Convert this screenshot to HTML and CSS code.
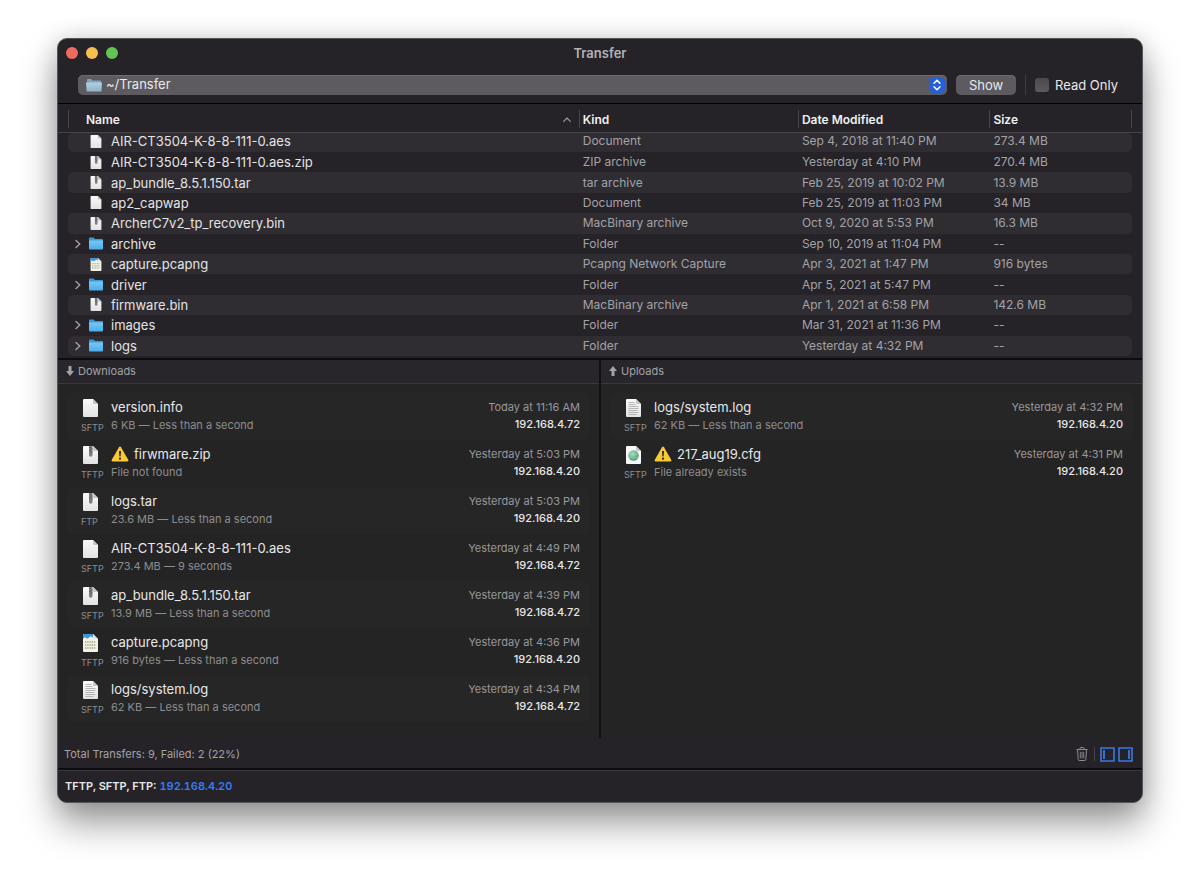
FILE: index.html
```html
<!DOCTYPE html>
<html lang="en">
<head>
<meta charset="utf-8">
<title>Transfer</title>
<link rel="stylesheet" href="styles.css">
</head>
<body>
<svg class="defs" aria-hidden="true">
  <defs>
    <linearGradient id="paper" x1="0" y1="0" x2="0" y2="1"><stop offset="0" stop-color="#fafafa"/><stop offset="1" stop-color="#e2e2e3"/></linearGradient>
    <linearGradient id="blue" x1="0" y1="0" x2="0" y2="1"><stop offset="0" stop-color="#76c8f5"/><stop offset="1" stop-color="#4cacea"/></linearGradient>
    <linearGradient id="pale" x1="0" y1="0" x2="0" y2="1"><stop offset="0" stop-color="#b4cfe2"/><stop offset="1" stop-color="#8fb2cc"/></linearGradient>
    <radialGradient id="globe" cx=".4" cy=".35" r=".7"><stop offset="0" stop-color="#a9dcc0"/><stop offset="1" stop-color="#3f9b6d"/></radialGradient>
  </defs>
  <symbol id="doc" viewBox="0 0 15 18">
    <path d="M1 0h9l5 5v12a1 1 0 0 1-1 1H1a1 1 0 0 1-1-1V1a1 1 0 0 1 1-1z" fill="url(#paper)"/>
    <path d="M10 0l5 5h-4a1 1 0 0 1-1-1z" fill="#c6c6c8"/>
  </symbol>
  <symbol id="zip" viewBox="0 0 15 18">
    <path d="M1 0h9l5 5v12a1 1 0 0 1-1 1H1a1 1 0 0 1-1-1V1a1 1 0 0 1 1-1z" fill="url(#paper)"/>
    <path d="M10 0l5 5h-4a1 1 0 0 1-1-1z" fill="#c6c6c8"/>
    <path d="M6 0h3.500v9a1.700 1.700 0 0 1-3.500 0z" fill="#7d7d80"/>
    <path d="M6 1.500h2M7.500 3h2M6 4.500h2M7.500 6h2" stroke="#5f5f64"/>
  </symbol>
  <symbol id="log" viewBox="0 0 15 18">
    <path d="M1 0h9l5 5v12a1 1 0 0 1-1 1H1a1 1 0 0 1-1-1V1a1 1 0 0 1 1-1z" fill="url(#paper)"/>
    <path d="M10 0l5 5h-4a1 1 0 0 1-1-1z" fill="#c6c6c8"/>
    <path d="M2.500 3.500h6M2.500 5.500h7M2.500 7.500h10M2.500 9.500h10M2.500 11.500h9M2.500 13.500h10M2.500 15.500h8" stroke="#b0b0b3" stroke-width=".9"/>
  </symbol>
  <symbol id="pcap" viewBox="0 0 15 18">
    <path d="M1 0h9l5 5v12a1 1 0 0 1-1 1H1a1 1 0 0 1-1-1V1a1 1 0 0 1 1-1z" fill="#f3f2e4"/>
    <path d="M0 5V1a1 1 0 0 1 1-1h9l3.500 3.500-1.500 1C10 4 9 2.500 8 2.500 6 2.500 6 5 4 4.500 2.500 4 2 2.500 0 5z" fill="#3a97d9"/>
    <path d="M10 0l5 5h-4a1 1 0 0 1-1-1z" fill="#d8e8f2"/>
    <path d="M2 8h11M2 11h11M2 14h11" stroke="#a5a58c" stroke-width="1.400" stroke-dasharray="1.400 .8"/>
  </symbol>
  <symbol id="cfg" viewBox="0 0 15 18">
    <path d="M1 0h9l5 5v12a1 1 0 0 1-1 1H1a1 1 0 0 1-1-1V1a1 1 0 0 1 1-1z" fill="#f8f8f8"/>
    <path d="M10 0l5 5h-4a1 1 0 0 1-1-1z" fill="#c6c6c8"/>
    <circle cx="7.500" cy="9.500" r="5.200" fill="url(#globe)"/>
    <path d="M3 8q4.500 2 9 0M3 11.300q4.500 2 9 0" fill="none" stroke="#a5dabb" stroke-width=".5"/>
  </symbol>
  <symbol id="folder" viewBox="0 0 14 12">
    <path d="M0 1a1 1 0 0 1 1-1h3.500l1.500 1.500h7a1 1 0 0 1 1 1V5H0z" fill="#3c9ad6"/>
    <path d="M0 3h14v8a1 1 0 0 1-1 1H1a1 1 0 0 1-1-1z" fill="url(#blue)"/>
  </symbol>
  <symbol id="home" viewBox="0 0 16 13">
    <path d="M1 1a1 1 0 0 1 1-1h3l1.500 1.500H14a1 1 0 0 1 1 1V6H1z" fill="#7fa5c2"/>
    <path d="M0 3.500h16l-.6 9H.6z" fill="url(#pale)"/>
  </symbol>
  <symbol id="warn" viewBox="0 0 18 16">
    <path d="M8 1.200a1.200 1.200 0 0 1 2 0l7.200 12.600a1.200 1.200 0 0 1-1 1.700H1.800a1.200 1.200 0 0 1-1-1.700z" fill="#fac93a"/>
    <path d="M8 5h2l-.4 5.500H8.400z" fill="#2b2415"/><circle cx="9" cy="12.700" r="1.100" fill="#2b2415"/>
  </symbol>
  <symbol id="chev" viewBox="0 0 6 10"><path d="M1 1.500L4.800 5 1 8.500" fill="none" stroke="#a3a2a6" stroke-width="1.400" stroke-linecap="round" stroke-linejoin="round"/></symbol>
</svg>

<main class="window">
  <header class="titlebar">
    <div class="lights">
      <button class="light close" aria-label="Close"></button>
      <button class="light minimize" aria-label="Minimize"></button>
      <button class="light zoom" aria-label="Zoom"></button>
    </div>
    <h1 class="title">Transfer</h1>
  </header>

  <div class="toolbar">
    <div class="path">
      <svg class="path-icon"><use href="#home"/></svg>
      <select class="path-select" aria-label="Folder"><option>~/Transfer</option></select>
      <svg class="path-arrows" viewBox="0 0 16 16"><rect width="16" height="16" rx="4" fill="#2660d8"/><path d="M5 6.300l3-3 3 3M5 9.700l3 3 3-3" fill="none" stroke="#fff" stroke-width="1.500" stroke-linecap="round" stroke-linejoin="round"/></svg>
    </div>
    <button class="show">Show</button>
    <label class="readonly"><input class="check" type="checkbox">Read Only</label>
  </div>

  <section class="files">
    <table class="table">
      <colgroup><col class="col-name"><col class="col-kind"><col class="col-date"><col class="col-size"></colgroup>
      <thead>
        <tr>
          <th><div class="head head-name">Name<svg class="sort" viewBox="0 0 8 5"><path d="M.7 4.300L4 1l3.300 3.300" fill="none" stroke="#a3a2a6" stroke-width="1.100" stroke-linecap="round"/></svg></div></th>
          <th><div class="head">Kind</div></th>
          <th><div class="head">Date Modified</div></th>
          <th><div class="head head-last">Size</div></th>
        </tr>
      </thead>
      <tbody>
        <tr class="first"><td><div class="name"><span class="twist"></span><svg class="file-icon"><use href="#doc"/></svg>AIR-CT3504-K-8-8-111-0.aes</div></td><td>Document</td><td>Sep 4, 2018 at 11:40 PM</td><td>273.4 MB</td></tr>
        <tr><td><div class="name"><span class="twist"></span><svg class="file-icon"><use href="#zip"/></svg>AIR-CT3504-K-8-8-111-0.aes.zip</div></td><td>ZIP archive</td><td>Yesterday at 4:10 PM</td><td>270.4 MB</td></tr>
        <tr><td><div class="name"><span class="twist"></span><svg class="file-icon"><use href="#zip"/></svg>ap_bundle_8.5.1.150.tar</div></td><td>tar archive</td><td>Feb 25, 2019 at 10:02 PM</td><td>13.9 MB</td></tr>
        <tr><td><div class="name"><span class="twist"></span><svg class="file-icon"><use href="#doc"/></svg>ap2_capwap</div></td><td>Document</td><td>Feb 25, 2019 at 11:03 PM</td><td>34 MB</td></tr>
        <tr><td><div class="name"><span class="twist"></span><svg class="file-icon"><use href="#zip"/></svg>ArcherC7v2_tp_recovery.bin</div></td><td>MacBinary archive</td><td>Oct 9, 2020 at 5:53 PM</td><td>16.3 MB</td></tr>
        <tr><td><div class="name"><button class="twist" aria-label="Expand archive"><svg class="chev"><use href="#chev"/></svg></button><svg class="file-icon"><use href="#folder"/></svg>archive</div></td><td>Folder</td><td>Sep 10, 2019 at 11:04 PM</td><td>--</td></tr>
        <tr><td><div class="name"><span class="twist"></span><svg class="file-icon"><use href="#pcap"/></svg>capture.pcapng</div></td><td>Pcapng Network Capture</td><td>Apr 3, 2021 at 1:47 PM</td><td>916 bytes</td></tr>
        <tr><td><div class="name"><button class="twist" aria-label="Expand driver"><svg class="chev"><use href="#chev"/></svg></button><svg class="file-icon"><use href="#folder"/></svg>driver</div></td><td>Folder</td><td>Apr 5, 2021 at 5:47 PM</td><td>--</td></tr>
        <tr><td><div class="name"><span class="twist"></span><svg class="file-icon"><use href="#zip"/></svg>firmware.bin</div></td><td>MacBinary archive</td><td>Apr 1, 2021 at 6:58 PM</td><td>142.6 MB</td></tr>
        <tr><td><div class="name"><button class="twist" aria-label="Expand images"><svg class="chev"><use href="#chev"/></svg></button><svg class="file-icon"><use href="#folder"/></svg>images</div></td><td>Folder</td><td>Mar 31, 2021 at 11:36 PM</td><td>--</td></tr>
        <tr><td><div class="name"><button class="twist" aria-label="Expand logs"><svg class="chev"><use href="#chev"/></svg></button><svg class="file-icon"><use href="#folder"/></svg>logs</div></td><td>Folder</td><td>Yesterday at 4:32 PM</td><td>--</td></tr>
      </tbody>
    </table>
  </section>

  <div class="panes">
    <section class="pane">
      <h2 class="pane-head"><svg class="arrow" viewBox="0 0 8 10"><path d="M2.500 0h3v5H8L4 10 0 5h2.500z" fill="#a3a2a6"/></svg>Downloads</h2>
      <ul class="list">
        <li class="item"><div class="type"><svg class="type-icon"><use href="#doc"/></svg>SFTP</div><div class="info"><div class="file">version.info</div><div class="note">6 KB — Less than a second</div></div><div class="meta"><div class="when">Today at 11:16 AM</div><div class="host">192.168.4.72</div></div></li>
        <li class="item"><div class="type"><svg class="type-icon"><use href="#zip"/></svg>TFTP</div><div class="info"><div class="file"><svg class="warn"><use href="#warn"/></svg>firwmare.zip</div><div class="note">File not found</div></div><div class="meta"><div class="when">Yesterday at 5:03 PM</div><div class="host">192.168.4.20</div></div></li>
        <li class="item"><div class="type"><svg class="type-icon"><use href="#zip"/></svg>FTP</div><div class="info"><div class="file">logs.tar</div><div class="note">23.6 MB — Less than a second</div></div><div class="meta"><div class="when">Yesterday at 5:03 PM</div><div class="host">192.168.4.20</div></div></li>
        <li class="item"><div class="type"><svg class="type-icon"><use href="#doc"/></svg>SFTP</div><div class="info"><div class="file">AIR-CT3504-K-8-8-111-0.aes</div><div class="note">273.4 MB — 9 seconds</div></div><div class="meta"><div class="when">Yesterday at 4:49 PM</div><div class="host">192.168.4.72</div></div></li>
        <li class="item"><div class="type"><svg class="type-icon"><use href="#zip"/></svg>SFTP</div><div class="info"><div class="file">ap_bundle_8.5.1.150.tar</div><div class="note">13.9 MB — Less than a second</div></div><div class="meta"><div class="when">Yesterday at 4:39 PM</div><div class="host">192.168.4.72</div></div></li>
        <li class="item"><div class="type"><svg class="type-icon"><use href="#pcap"/></svg>TFTP</div><div class="info"><div class="file">capture.pcapng</div><div class="note">916 bytes — Less than a second</div></div><div class="meta"><div class="when">Yesterday at 4:36 PM</div><div class="host">192.168.4.20</div></div></li>
        <li class="item"><div class="type"><svg class="type-icon"><use href="#log"/></svg>SFTP</div><div class="info"><div class="file">logs/system.log</div><div class="note">62 KB — Less than a second</div></div><div class="meta"><div class="when">Yesterday at 4:34 PM</div><div class="host">192.168.4.72</div></div></li>
      </ul>
    </section>
    <section class="pane">
      <h2 class="pane-head"><svg class="arrow" viewBox="0 0 8 10"><path d="M2.500 10h3V5H8L4 0 0 5h2.500z" fill="#a3a2a6"/></svg>Uploads</h2>
      <ul class="list">
        <li class="item"><div class="type"><svg class="type-icon"><use href="#log"/></svg>SFTP</div><div class="info"><div class="file">logs/system.log</div><div class="note">62 KB — Less than a second</div></div><div class="meta"><div class="when">Yesterday at 4:32 PM</div><div class="host">192.168.4.20</div></div></li>
        <li class="item"><div class="type"><svg class="type-icon"><use href="#cfg"/></svg>SFTP</div><div class="info"><div class="file"><svg class="warn"><use href="#warn"/></svg>217_aug19.cfg</div><div class="note">File already exists</div></div><div class="meta"><div class="when">Yesterday at 4:31 PM</div><div class="host">192.168.4.20</div></div></li>
      </ul>
    </section>
  </div>

  <div class="status">
    <span>Total Transfers: 9, Failed: 2 (22%)</span>
    <div class="tools">
      <button class="tool trash" aria-label="Clear transfers"><svg width="12" height="14" viewBox="0 0 12 14" fill="none" stroke="#8c8b8f"><path d="M.5 2.500h11M4 2.500V1.200Q4 .5 4.700.5h2.600q.7 0 .7.700v1.300M1.500 2.500l.7 10q.1 1 1 1h5.600q.9 0 1-1l.7-10"/><path d="M4.300 4.800v6.500M6 4.800v6.500M7.700 4.800v6.500" stroke-width=".9"/></svg></button>
      <button class="tool" aria-label="Toggle downloads"><svg width="15" height="15" viewBox="0 0 15 15"><path d="M1 1h13v13H1z" fill="none" stroke="#3b78e0" stroke-width="1.600"/><path d="M4 3v9" stroke="#3b78e0" stroke-width="1.800"/></svg></button>
      <button class="tool" aria-label="Toggle uploads"><svg width="15" height="15" viewBox="0 0 15 15"><path d="M1 1h13v13H1z" fill="none" stroke="#3b78e0" stroke-width="1.600"/><path d="M11 3v9" stroke="#3b78e0" stroke-width="1.800"/></svg></button>
    </div>
  </div>

  <footer class="footer">TFTP, SFTP, FTP: <a class="address" href="#">192.168.4.20</a></footer>
</main>
</body>
</html>
```
FILE: styles.css
```css
* { box-sizing: border-box; }

body {
  margin: 0;
  padding: 38px 57px 76px;
  background: #fff;
  font-family: Inter, "Liberation Sans", sans-serif;
  font-size: 12px;
  color: #a3a2a6;
}

button { font: inherit; color: inherit; background: none; border: 0; padding: 0; }
svg { display: block; flex: none; }
.defs { position: absolute; width: 0; height: 0; }

.window {
  border: 1px solid #56555a;
  border-radius: 10px;
  background: #252328;
  overflow: hidden;
  box-shadow: 0 20px 36px rgba(0, 0, 0, .4), 0 0 24px rgba(0, 0, 0, .14);
}

.titlebar {
  display: grid;
  grid-template-columns: 1fr auto 1fr;
  align-items: center;
  height: 28px;
  padding: 0 8px;
}
.lights { display: flex; gap: 8px; }
.light { width: 12px; height: 12px; border-radius: 50%; }
.close { background: #ed6a5f; }
.minimize { background: #f5be4f; }
.zoom { background: #61c454; }
.title { margin: 0; font-size: 13px; font-weight: 600; color: #b3b2b5; }

.toolbar {
  display: flex;
  align-items: center;
  gap: 9px;
  height: 36px;
  padding: 0 24px 1px 20px;
}
.path { position: relative; flex: 1; }
.path-select {
  display: block;
  width: 100%;
  height: 20px;
  padding: 0 28px 1px;
  border: 0;
  border-radius: 5px;
  appearance: none;
  background: #5d5b60;
  box-shadow: inset 0 1px #6d6b70;
  font: 13px/18px Inter, sans-serif;
  color: #e8e8e9;
}
.path-icon { position: absolute; left: 8px; top: 4px; width: 16px; height: 13px; }
.path-arrows { position: absolute; right: 2px; top: 2px; width: 16px; height: 16px; }
.show {
  width: 60px;
  height: 20px;
  border-radius: 5px;
  background: #5d5b60;
  box-shadow: inset 0 1px #6d6b70;
  font-size: 13px;
  line-height: 18px;
  color: #e8e8e9;
}
.readonly {
  display: flex;
  align-items: center;
  gap: 6px;
  height: 20px;
  padding-left: 9px;
  border-left: 1px solid #3d3b40;
  font-size: 13px;
  color: #e8e8e9;
}
.check {
  appearance: none;
  width: 14px;
  height: 14px;
  margin: 0;
  border-radius: 3px;
  background: linear-gradient(#4b494e, #5b595e);
}

.files {
  padding: 0 10px 2px;
  border-top: 1px solid #000;
  background: linear-gradient(#454348, #454348) 0 28px / 100% 1px no-repeat;
}
.table {
  width: 100%;
  height: 252px;
  border-collapse: separate;
  border-spacing: 0;
  table-layout: fixed;
}
.col-name { width: 48%; }
.col-kind { width: 20.6%; }
.col-date { width: 18%; }
.col-size { width: 13.4%; }
th { height: 29px; padding: 1px 0 0; text-align: left; }
td { padding: 0 0 0 4px; line-height: 16px; white-space: nowrap; }
td:first-child { padding-left: 0; }
.head {
  display: flex;
  align-items: center;
  justify-content: space-between;
  height: 18px;
  padding: 0 8px 0 3px;
  border-left: 1px solid #48464b;
  font-weight: 600;
  color: #f0f0f1;
}
.head-name { padding-left: 17px; }
.head-last { border-right: 1px solid #48464b; }
.sort { width: 8px; height: 5px; }
.first td { height: 19px; padding-bottom: 3px; }
tbody tr:nth-child(odd) td { background: #2f2d32; }
tbody tr:nth-child(odd) td:first-child { border-radius: 5px 0 0 5px; }
tbody tr:nth-child(odd) td:last-child { border-radius: 0 5px 5px 0; }
tbody .first td:first-child { border-top-left-radius: 0; }
tbody .first td:last-child { border-top-right-radius: 0; }
.name { display: flex; align-items: center; font-size: 13px; color: #e3e3e4; }
.twist { display: flex; justify-content: center; width: 19px; }
.chev { width: 6px; height: 10px; }
.file-icon { width: 14px; height: 13px; margin: 0 8px 0 2px; }

.panes {
  display: grid;
  grid-template-columns: 1fr 1fr;
  gap: 2px;
  border-top: 2px solid #0d0c0e;
  background: #111012;
}
.pane { background: #242424; }
.pane-head {
  display: flex;
  align-items: center;
  gap: 4px;
  height: 24px;
  margin: 0;
  padding: 0 8px 1px;
  border-bottom: 1px solid #3a383d;
  background: #28262b;
  font-size: 11px;
  font-weight: 400;
}
.arrow { width: 8px; height: 10px; }
.list { margin: 0; padding: 9px 9px 16px; list-style: none; }
.item {
  display: grid;
  grid-template-columns: 30px 1fr auto;
  height: 47px;
  padding: 5px 10px 0 14px;
  border-radius: 6px;
}
.item:nth-child(odd) { background: #262626; }
.type { padding-top: 1px; font-size: 9px; line-height: 12px; color: #8d8c8f; }
.type-icon { width: 15px; height: 18px; margin: 0 0 5px 2px; }
.info { line-height: 18px; }
.meta { padding-top: 1px; line-height: 17px; text-align: right; }
.file { display: flex; align-items: center; gap: 5px; font-size: 13px; color: #e8e8e9; }
.warn { width: 18px; height: 16px; }
.note, .host, .when { font-size: 11px; }
.note { color: #8d8c8f; }
.when { color: #98979a; }
.host { font-weight: 500; color: #e8e8e9; }

.status {
  display: flex;
  align-items: center;
  justify-content: space-between;
  height: 30px;
  padding: 2px 9px 0 6px;
  background: #252328;
  font-size: 11px;
}
.tools { display: flex; align-items: center; gap: 3px; }
.trash { padding-right: 6px; margin-right: 2px; border-right: 1px solid #454348; }

.footer {
  height: 34px;
  padding: 0 7px;
  border-top: 2px solid #0d0c0e;
  box-shadow: inset 0 1px #39373c;
  font-size: 11px;
  font-weight: 600;
  line-height: 32px;
  color: #e8e8e9;
}
.address { color: #3b7af0; text-decoration: none; font-variant-numeric: tabular-nums; }
```
